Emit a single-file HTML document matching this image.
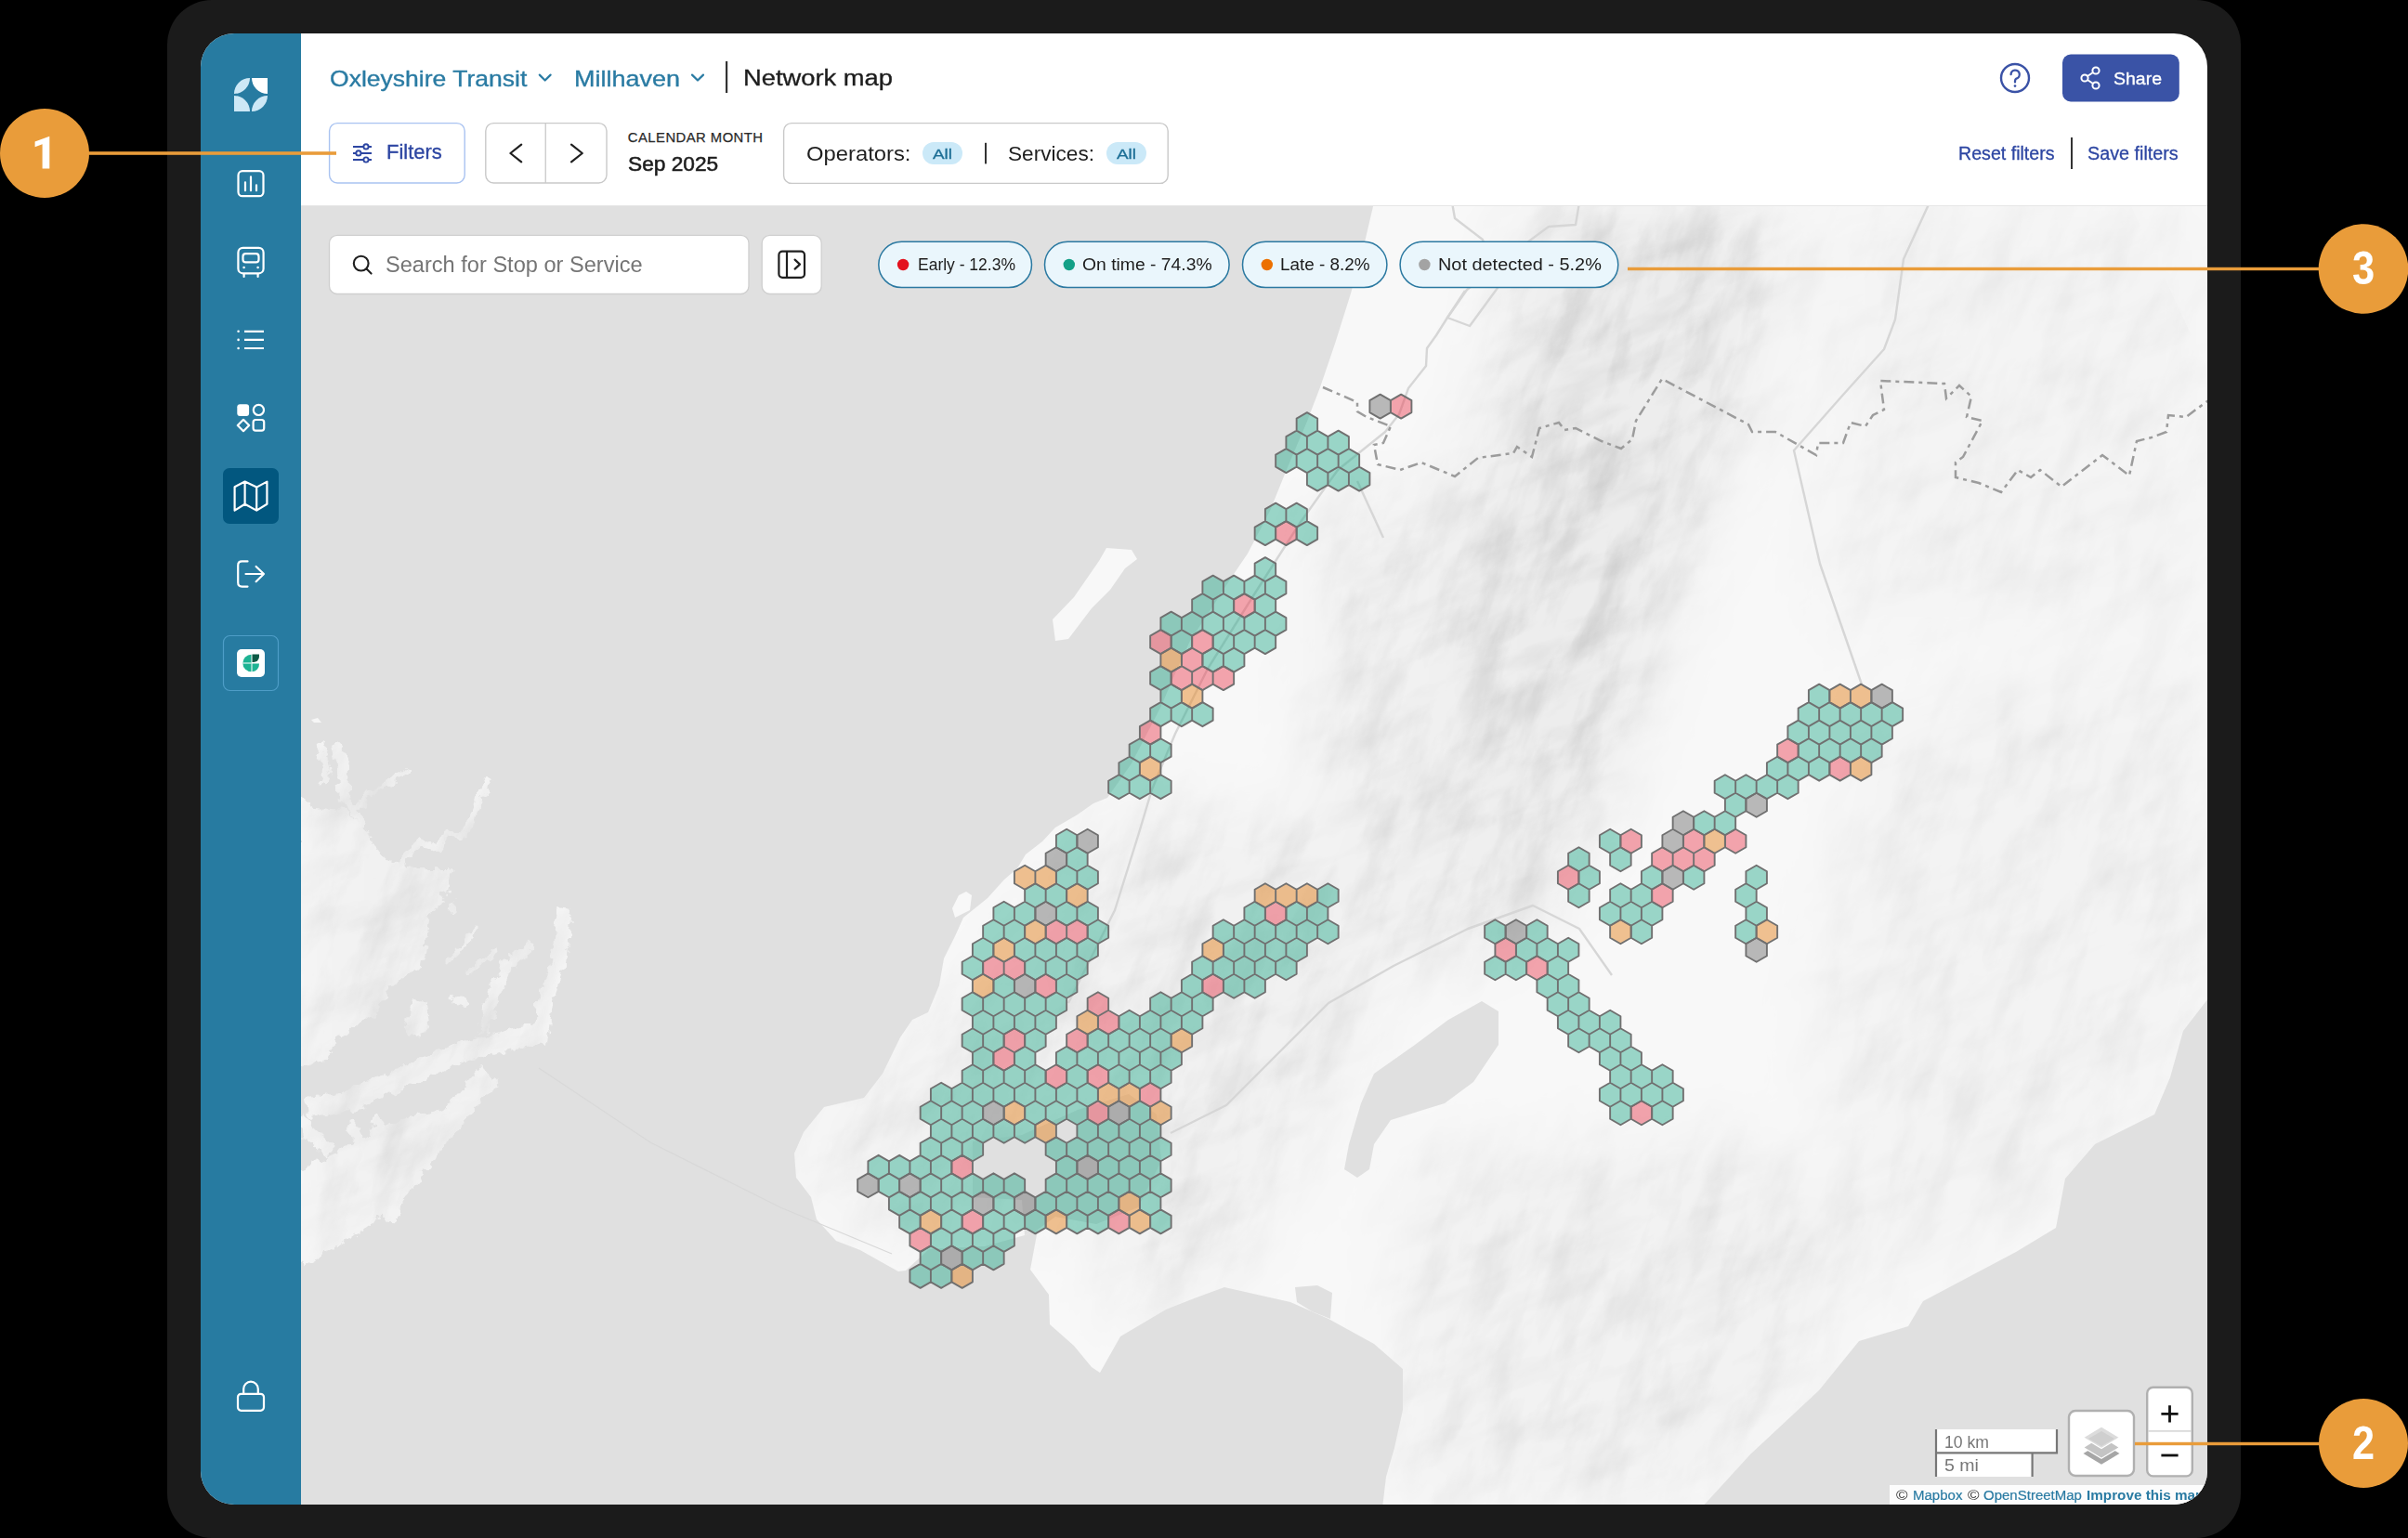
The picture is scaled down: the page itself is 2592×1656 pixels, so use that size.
<!DOCTYPE html>
<html><head><meta charset="utf-8"><style>
html,body{margin:0;padding:0;background:#000;width:2592px;height:1656px;overflow:hidden;position:relative}
.t{position:absolute;white-space:pre;font-family:"Liberation Sans",sans-serif;transform-origin:0 0}
</style></head><body>
<div style="position:absolute;left:180px;top:0;width:2232px;height:1656px;border-radius:48px;background:#1b1b1b"></div>
<div id="screen" style="position:absolute;left:216px;top:36px;width:2160px;height:1584px;border-radius:36px;overflow:hidden;background:#fff">
<div style="position:absolute;left:108px;top:186px;width:2052px;height:1398px;background:#e0e0e0;overflow:hidden">
<svg width="2052" height="1398" viewBox="324 222 2052 1398" style="position:absolute;left:0;top:0">
<defs><filter id="rough" x="-10%" y="-10%" width="120%" height="120%"><feTurbulence type="fractalNoise" baseFrequency="0.09" numOctaves="3" seed="5" result="t"/><feDisplacementMap in="SourceGraphic" in2="t" scale="14" xChannelSelector="R" yChannelSelector="G"/></filter><mask id="landmask" maskUnits="userSpaceOnUse" x="300" y="200" width="2100" height="1450"><rect x="300" y="200" width="2100" height="1450" fill="#000"/><path d="M1479,218L2380,218L2380,1071L2350,1110L2336,1160L2319,1200L2255,1232L2223,1269L2213,1322L2170,1348L2070,1401L2054,1428L2001,1444L1958,1497L1884,1566L1831,1624L1488,1624L1492,1590L1501,1559L1510,1518L1510,1474L1479,1447L1430,1420L1389,1402L1318,1386L1288,1397L1255,1410L1206,1439L1184,1478L1175,1472L1156,1449L1130,1426L1129,1394L1109,1367L1117,1324L1103,1330L1060,1342L1000,1345L975,1368L967,1369L949,1359L926,1346L900,1336L879,1313L873,1289L857,1268L855,1242L865,1219L887,1192L930,1182L950,1156L969,1117L982,1098L999,1090L1011,1061L1016,1032L1028,1008L1037,988L1063,967L1081,947L1095,935L1104,920L1122,906L1136,891L1160,877L1177,865L1192,859L1218,822L1234,791L1250,760L1265,725L1281,690L1304,655L1324,624L1343,596L1367,550L1386,503L1406,456L1421,417L1437,370L1454,316L1468,265ZM1191,590L1218,592L1224,602L1211,612L1195,635L1175,655L1150,688L1136,690L1133,667L1156,643L1183,604ZM1040,960L1046,964L1044,980L1028,988L1025,978L1032,964ZM335,775L342,773L346,778L338,778Z" fill="#fff"/><g filter="url(#rough)"><path d="M320,857L340,870L371,872L395,902L420,930L452,935L486,935L480,960L462,990L455,1040L420,1062L400,1095L370,1112L350,1140L320,1152ZM487,1072L502,1073L500,1084L489,1083ZM445,1074L458,1080L462,1110L440,1117L436,1100ZM320,1262L360,1242L400,1218L440,1203L478,1192L495,1202L468,1250L430,1288L380,1318L320,1340Z" fill="#fff"/><path d="M361,802L369,822L371,857L385,880L396,908" fill="none" stroke="#fff" stroke-width="11" stroke-linecap="butt" stroke-linejoin="round"/><path d="M439,827L423,843L400,853L382,873" fill="none" stroke="#fff" stroke-width="6" stroke-linecap="butt" stroke-linejoin="round"/><path d="M529,838L520,851L511,873L503,896L480,898L472,915L453,906L435,925L433,947" fill="none" stroke="#fff" stroke-width="8" stroke-linecap="butt" stroke-linejoin="round"/><path d="M607,978L605,1000L601,1037L586,1081L581,1123" fill="none" stroke="#fff" stroke-width="16" stroke-linecap="butt" stroke-linejoin="round"/><path d="M585,1112L540,1122L497,1132L435,1160L369,1188L330,1192" fill="none" stroke="#fff" stroke-width="22" stroke-linecap="butt" stroke-linejoin="round"/><path d="M537,1022L504,1047" fill="none" stroke="#fff" stroke-width="7" stroke-linecap="butt" stroke-linejoin="round"/><path d="M571,1018L546,1040L530,1075L520,1110" fill="none" stroke="#fff" stroke-width="13" stroke-linecap="butt" stroke-linejoin="round"/><path d="M514,1000L482,1035" fill="none" stroke="#fff" stroke-width="5" stroke-linecap="butt" stroke-linejoin="round"/><path d="M488,970L487,986" fill="none" stroke="#fff" stroke-width="5" stroke-linecap="butt" stroke-linejoin="round"/><path d="M320,1353L373,1321L423,1284L472,1222L527,1156" fill="none" stroke="#fff" stroke-width="26" stroke-linecap="butt" stroke-linejoin="round"/><path d="M383,1247L339,1296" fill="none" stroke="#fff" stroke-width="14" stroke-linecap="butt" stroke-linejoin="round"/><path d="M398,1247L376,1210" fill="none" stroke="#fff" stroke-width="12" stroke-linecap="butt" stroke-linejoin="round"/><path d="M423,1235L403,1203" fill="none" stroke="#fff" stroke-width="12" stroke-linecap="butt" stroke-linejoin="round"/><path d="M423,1259L420,1314" fill="none" stroke="#fff" stroke-width="14" stroke-linecap="butt" stroke-linejoin="round"/><path d="M320,1205L356,1240" fill="none" stroke="#fff" stroke-width="16" stroke-linecap="butt" stroke-linejoin="round"/><path d="M320,1290L345,1330" fill="none" stroke="#fff" stroke-width="20" stroke-linecap="butt" stroke-linejoin="round"/><path d="M345,800L352,830L345,845" fill="none" stroke="#fff" stroke-width="8" stroke-linecap="butt" stroke-linejoin="round"/></g></mask><filter id="mblur" x="-30%" y="-30%" width="160%" height="160%"><feGaussianBlur stdDeviation="35"/></filter><filter id="tex" x="0" y="0" width="1" height="1" color-interpolation-filters="sRGB"><feTurbulence type="fractalNoise" baseFrequency="0.011 0.032" numOctaves="5" seed="11" result="n"/><feColorMatrix in="n" type="matrix" values="0 0 0 0 0  0 0 0 0 0  0 0 0 0 0  2.4 0 0 0 -1.0"/></filter><mask id="mtn" maskUnits="userSpaceOnUse" x="300" y="200" width="2100" height="1450"><rect x="300" y="200" width="2100" height="1450" fill="#000"/><g filter="url(#mblur)"><path d="M1650,222 L1918,222 L1891,404 L1791,676 L1736,858 L1645,995 L1509,1040 L1480,858 L1560,585 Z" fill="#fff"/><path d="M1418,540 L1600,540 L1600,1040 L1418,1040 Z" fill="#aaa"/><path d="M1191,858 L1464,900 L1480,1100 L1400,1250 L1300,1404 L1191,1404 Z" fill="#999"/><path d="M1509,1250 L1850,1220 L2009,1300 L1950,1500 L1800,1620 L1509,1620 Z" fill="#8a8a8a"/><path d="M2009,767 L2376,700 L2376,1100 L2200,1300 L2009,1404 L1950,1100 Z" fill="#6a6a6a"/><path d="M1964,222 L2376,222 L2376,676 L1964,676 Z" fill="#5a5a5a"/><path d="M324,780 L540,840 L610,1000 L590,1150 L460,1330 L324,1360 Z" fill="#999"/><path d="M880,1180 L1000,1100 L1100,1000 L1190,900 L1200,1100 L1150,1300 L950,1350 L860,1260 Z" fill="#777"/></g></mask></defs>
<path d="M1479,218L2380,218L2380,1071L2350,1110L2336,1160L2319,1200L2255,1232L2223,1269L2213,1322L2170,1348L2070,1401L2054,1428L2001,1444L1958,1497L1884,1566L1831,1624L1488,1624L1492,1590L1501,1559L1510,1518L1510,1474L1479,1447L1430,1420L1389,1402L1318,1386L1288,1397L1255,1410L1206,1439L1184,1478L1175,1472L1156,1449L1130,1426L1129,1394L1109,1367L1117,1324L1103,1330L1060,1342L1000,1345L975,1368L967,1369L949,1359L926,1346L900,1336L879,1313L873,1289L857,1268L855,1242L865,1219L887,1192L930,1182L950,1156L969,1117L982,1098L999,1090L1011,1061L1016,1032L1028,1008L1037,988L1063,967L1081,947L1095,935L1104,920L1122,906L1136,891L1160,877L1177,865L1192,859L1218,822L1234,791L1250,760L1265,725L1281,690L1304,655L1324,624L1343,596L1367,550L1386,503L1406,456L1421,417L1437,370L1454,316L1468,265ZM1191,590L1218,592L1224,602L1211,612L1195,635L1175,655L1150,688L1136,690L1133,667L1156,643L1183,604ZM1040,960L1046,964L1044,980L1028,988L1025,978L1032,964ZM335,775L342,773L346,778L338,778Z" fill="#f8f8f8"/><g filter="url(#rough)"><path d="M320,857L340,870L371,872L395,902L420,930L452,935L486,935L480,960L462,990L455,1040L420,1062L400,1095L370,1112L350,1140L320,1152ZM487,1072L502,1073L500,1084L489,1083ZM445,1074L458,1080L462,1110L440,1117L436,1100ZM320,1262L360,1242L400,1218L440,1203L478,1192L495,1202L468,1250L430,1288L380,1318L320,1340Z" fill="#f8f8f8"/><path d="M361,802L369,822L371,857L385,880L396,908" fill="none" stroke="#f8f8f8" stroke-width="11" stroke-linecap="butt" stroke-linejoin="round"/><path d="M439,827L423,843L400,853L382,873" fill="none" stroke="#f8f8f8" stroke-width="6" stroke-linecap="butt" stroke-linejoin="round"/><path d="M529,838L520,851L511,873L503,896L480,898L472,915L453,906L435,925L433,947" fill="none" stroke="#f8f8f8" stroke-width="8" stroke-linecap="butt" stroke-linejoin="round"/><path d="M607,978L605,1000L601,1037L586,1081L581,1123" fill="none" stroke="#f8f8f8" stroke-width="16" stroke-linecap="butt" stroke-linejoin="round"/><path d="M585,1112L540,1122L497,1132L435,1160L369,1188L330,1192" fill="none" stroke="#f8f8f8" stroke-width="22" stroke-linecap="butt" stroke-linejoin="round"/><path d="M537,1022L504,1047" fill="none" stroke="#f8f8f8" stroke-width="7" stroke-linecap="butt" stroke-linejoin="round"/><path d="M571,1018L546,1040L530,1075L520,1110" fill="none" stroke="#f8f8f8" stroke-width="13" stroke-linecap="butt" stroke-linejoin="round"/><path d="M514,1000L482,1035" fill="none" stroke="#f8f8f8" stroke-width="5" stroke-linecap="butt" stroke-linejoin="round"/><path d="M488,970L487,986" fill="none" stroke="#f8f8f8" stroke-width="5" stroke-linecap="butt" stroke-linejoin="round"/><path d="M320,1353L373,1321L423,1284L472,1222L527,1156" fill="none" stroke="#f8f8f8" stroke-width="26" stroke-linecap="butt" stroke-linejoin="round"/><path d="M383,1247L339,1296" fill="none" stroke="#f8f8f8" stroke-width="14" stroke-linecap="butt" stroke-linejoin="round"/><path d="M398,1247L376,1210" fill="none" stroke="#f8f8f8" stroke-width="12" stroke-linecap="butt" stroke-linejoin="round"/><path d="M423,1235L403,1203" fill="none" stroke="#f8f8f8" stroke-width="12" stroke-linecap="butt" stroke-linejoin="round"/><path d="M423,1259L420,1314" fill="none" stroke="#f8f8f8" stroke-width="14" stroke-linecap="butt" stroke-linejoin="round"/><path d="M320,1205L356,1240" fill="none" stroke="#f8f8f8" stroke-width="16" stroke-linecap="butt" stroke-linejoin="round"/><path d="M320,1290L345,1330" fill="none" stroke="#f8f8f8" stroke-width="20" stroke-linecap="butt" stroke-linejoin="round"/><path d="M345,800L352,830L345,845" fill="none" stroke="#f8f8f8" stroke-width="8" stroke-linecap="butt" stroke-linejoin="round"/></g>
<g mask="url(#landmask)"><g mask="url(#mtn)"><rect x="300" y="200" width="2100" height="1450" fill="#000" opacity="0.045"/><g transform="rotate(-68 1350 920)"><rect x="200" y="-300" width="2300" height="2450" fill="#000" filter="url(#tex)" opacity="0.085"/></g><g transform="rotate(-25 1350 920)"><rect x="200" y="-300" width="2300" height="2450" fill="#000" filter="url(#tex)" opacity="0.05"/></g></g></g>
<path d="M1047,1229L1100,1222L1160,1195L1215,1178L1245,1200L1250,1250L1225,1300L1180,1318L1136,1310L1117,1324L1103,1330L1100,1292L1047,1289ZM1595,1078L1613,1089L1613,1125L1586,1165L1555,1188L1497,1206L1479,1232L1474,1259L1461,1268L1447,1259L1452,1232L1465,1188L1479,1156L1523,1125L1559,1098ZM1394,1386L1418,1384L1434,1392L1432,1420L1412,1412L1396,1402Z" fill="#e0e0e0"/>
<path d="M2077,218L2049,279L2040,344L2028,376L1984,425L1931,485L1959,607L2004,737" fill="none" stroke="#d6d6d6" stroke-width="2.4" stroke-linejoin="round"/>
<path d="M1700,218L1696,242L1667,244L1648,258L1579,312L1558,342L1546,361L1536,375L1535,394L1516,418L1506,446L1491,465L1440,506L1400,562L1350,640L1300,720L1265,790L1240,850L1225,900L1200,980L1175,1030L1150,1080" fill="none" stroke="#d6d6d6" stroke-width="2.4" stroke-linejoin="round"/>
<path d="M1563,218L1566,235L1596,258L1612,310L1582,351L1558,342L1577,313" fill="none" stroke="#d6d6d6" stroke-width="2.4" stroke-linejoin="round"/>
<path d="M1461,518L1489,579" fill="none" stroke="#d6d6d6" stroke-width="2.4" stroke-linejoin="round"/>
<path d="M1735,1050L1700,1000L1650,975L1580,1000L1500,1040L1430,1080L1380,1130L1320,1190L1260,1220" fill="none" stroke="#d6d6d6" stroke-width="2.4" stroke-linejoin="round"/>
<path d="M1424,417L1461,433L1461,443L1471,449L1497,459L1489,477L1479,479L1483,500L1507,506L1530,498L1566,513L1591,493L1629,488L1633,481L1649,492L1657,461L1678,455L1684,463L1696,461L1724,475L1745,483L1757,473L1761,453L1789,408L1882,457L1886,465L1911,465L1955,490L1957,477L1984,477L1992,455L2008,459L2016,447L2028,441L2024,410L2093,413L2095,429L2109,415L2122,427L2117,449L2134,453L2113,492L2105,498L2105,514L2130,520L2154,530L2172,506L2186,514L2196,506L2219,524L2263,490L2292,512L2300,475L2316,471L2332,465L2334,447L2353,449L2380,429" fill="none" stroke="#9c9c9c" stroke-width="2.5" stroke-dasharray="11 5 4 5"/>
<path d="M580,1150 L700,1230 L840,1300 L960,1350" fill="none" stroke="#d8d8d8" stroke-width="1.2"/>
<path d="M1406.90,470.09L1395.65,463.60L1395.65,450.60L1406.90,444.11L1418.15,450.60L1418.15,463.60ZM1395.65,489.60L1384.40,483.10L1384.40,470.11L1395.65,463.61L1406.90,470.11L1406.90,483.10ZM1418.15,489.60L1406.90,483.10L1406.90,470.11L1418.15,463.61L1429.40,470.11L1429.40,483.10ZM1440.65,489.60L1429.40,483.10L1429.40,470.11L1440.65,463.61L1451.90,470.11L1451.90,483.10ZM1384.40,509.10L1373.15,502.61L1373.15,489.61L1384.40,483.12L1395.65,489.61L1395.65,502.61ZM1406.90,509.10L1395.65,502.61L1395.65,489.61L1406.90,483.12L1418.15,489.61L1418.15,502.61ZM1429.40,509.10L1418.15,502.61L1418.15,489.61L1429.40,483.12L1440.65,489.61L1440.65,502.61ZM1451.90,509.10L1440.65,502.61L1440.65,489.61L1451.90,483.12L1463.15,489.61L1463.15,502.61ZM1418.15,528.61L1406.90,522.11L1406.90,509.12L1418.15,502.62L1429.40,509.12L1429.40,522.11ZM1440.65,528.61L1429.40,522.11L1429.40,509.12L1440.65,502.62L1451.90,509.12L1451.90,522.11ZM1463.15,528.61L1451.90,522.11L1451.90,509.12L1463.15,502.62L1474.40,509.12L1474.40,522.11ZM1373.15,567.62L1361.90,561.12L1361.90,548.13L1373.15,541.63L1384.40,548.13L1384.40,561.12ZM1395.65,567.62L1384.40,561.12L1384.40,548.13L1395.65,541.63L1406.90,548.13L1406.90,561.12ZM1361.90,587.12L1350.65,580.63L1350.65,567.63L1361.90,561.14L1373.15,567.63L1373.15,580.63ZM1406.90,587.12L1395.65,580.63L1395.65,567.63L1406.90,561.14L1418.15,567.63L1418.15,580.63ZM1361.90,626.13L1350.65,619.64L1350.65,606.64L1361.90,600.15L1373.15,606.64L1373.15,619.64ZM1305.65,645.64L1294.40,639.14L1294.40,626.15L1305.65,619.65L1316.90,626.15L1316.90,639.14ZM1328.15,645.64L1316.90,639.14L1316.90,626.15L1328.15,619.65L1339.40,626.15L1339.40,639.14ZM1350.65,645.64L1339.40,639.14L1339.40,626.15L1350.65,619.65L1361.90,626.15L1361.90,639.14ZM1373.15,645.64L1361.90,639.14L1361.90,626.15L1373.15,619.65L1384.40,626.15L1384.40,639.14ZM1294.40,665.14L1283.15,658.65L1283.15,645.65L1294.40,639.16L1305.65,645.65L1305.65,658.65ZM1316.90,665.14L1305.65,658.65L1305.65,645.65L1316.90,639.16L1328.15,645.65L1328.15,658.65ZM1361.90,665.14L1350.65,658.65L1350.65,645.65L1361.90,639.16L1373.15,645.65L1373.15,658.65ZM1260.65,684.65L1249.40,678.15L1249.40,665.16L1260.65,658.66L1271.90,665.16L1271.90,678.15ZM1283.15,684.65L1271.90,678.15L1271.90,665.16L1283.15,658.66L1294.40,665.16L1294.40,678.15ZM1305.65,684.65L1294.40,678.15L1294.40,665.16L1305.65,658.66L1316.90,665.16L1316.90,678.15ZM1328.15,684.65L1316.90,678.15L1316.90,665.16L1328.15,658.66L1339.40,665.16L1339.40,678.15ZM1350.65,684.65L1339.40,678.15L1339.40,665.16L1350.65,658.66L1361.90,665.16L1361.90,678.15ZM1373.15,684.65L1361.90,678.15L1361.90,665.16L1373.15,658.66L1384.40,665.16L1384.40,678.15ZM1271.90,704.15L1260.65,697.66L1260.65,684.66L1271.90,678.17L1283.15,684.66L1283.15,697.66ZM1316.90,704.15L1305.65,697.66L1305.65,684.66L1316.90,678.17L1328.15,684.66L1328.15,697.66ZM1339.40,704.15L1328.15,697.66L1328.15,684.66L1339.40,678.17L1350.65,684.66L1350.65,697.66ZM1361.90,704.15L1350.65,697.66L1350.65,684.66L1361.90,678.17L1373.15,684.66L1373.15,697.66ZM1305.65,723.66L1294.40,717.16L1294.40,704.17L1305.65,697.67L1316.90,704.17L1316.90,717.16ZM1328.15,723.66L1316.90,717.16L1316.90,704.17L1328.15,697.67L1339.40,704.17L1339.40,717.16ZM1249.40,743.16L1238.15,736.67L1238.15,723.67L1249.40,717.18L1260.65,723.67L1260.65,736.67ZM1260.65,762.67L1249.40,756.17L1249.40,743.18L1260.65,736.68L1271.90,743.18L1271.90,756.17ZM1958.15,762.67L1946.90,756.17L1946.90,743.18L1958.15,736.68L1969.40,743.18L1969.40,756.17ZM1249.40,782.17L1238.15,775.68L1238.15,762.68L1249.40,756.19L1260.65,762.68L1260.65,775.68ZM1271.90,782.17L1260.65,775.68L1260.65,762.68L1271.90,756.19L1283.15,762.68L1283.15,775.68ZM1294.40,782.17L1283.15,775.68L1283.15,762.68L1294.40,756.19L1305.65,762.68L1305.65,775.68ZM1946.90,782.17L1935.65,775.68L1935.65,762.68L1946.90,756.19L1958.15,762.68L1958.15,775.68ZM1969.40,782.17L1958.15,775.68L1958.15,762.68L1969.40,756.19L1980.65,762.68L1980.65,775.68ZM1991.90,782.17L1980.65,775.68L1980.65,762.68L1991.90,756.19L2003.15,762.68L2003.15,775.68ZM2014.40,782.17L2003.15,775.68L2003.15,762.68L2014.40,756.19L2025.65,762.68L2025.65,775.68ZM2036.90,782.17L2025.65,775.68L2025.65,762.68L2036.90,756.19L2048.15,762.68L2048.15,775.68ZM1935.65,801.68L1924.40,795.18L1924.40,782.19L1935.65,775.69L1946.90,782.19L1946.90,795.18ZM1958.15,801.68L1946.90,795.18L1946.90,782.19L1958.15,775.69L1969.40,782.19L1969.40,795.18ZM1980.65,801.68L1969.40,795.18L1969.40,782.19L1980.65,775.69L1991.90,782.19L1991.90,795.18ZM2003.15,801.68L1991.90,795.18L1991.90,782.19L2003.15,775.69L2014.40,782.19L2014.40,795.18ZM2025.65,801.68L2014.40,795.18L2014.40,782.19L2025.65,775.69L2036.90,782.19L2036.90,795.18ZM1226.90,821.18L1215.65,814.69L1215.65,801.69L1226.90,795.20L1238.15,801.69L1238.15,814.69ZM1249.40,821.18L1238.15,814.69L1238.15,801.69L1249.40,795.20L1260.65,801.69L1260.65,814.69ZM1946.90,821.18L1935.65,814.69L1935.65,801.69L1946.90,795.20L1958.15,801.69L1958.15,814.69ZM1969.40,821.18L1958.15,814.69L1958.15,801.69L1969.40,795.20L1980.65,801.69L1980.65,814.69ZM1991.90,821.18L1980.65,814.69L1980.65,801.69L1991.90,795.20L2003.15,801.69L2003.15,814.69ZM2014.40,821.18L2003.15,814.69L2003.15,801.69L2014.40,795.20L2025.65,801.69L2025.65,814.69ZM1215.65,840.69L1204.40,834.19L1204.40,821.20L1215.65,814.70L1226.90,821.20L1226.90,834.19ZM1913.15,840.69L1901.90,834.19L1901.90,821.20L1913.15,814.70L1924.40,821.20L1924.40,834.19ZM1935.65,840.69L1924.40,834.19L1924.40,821.20L1935.65,814.70L1946.90,821.20L1946.90,834.19ZM1958.15,840.69L1946.90,834.19L1946.90,821.20L1958.15,814.70L1969.40,821.20L1969.40,834.19ZM1204.40,860.19L1193.15,853.70L1193.15,840.70L1204.40,834.21L1215.65,840.70L1215.65,853.70ZM1226.90,860.19L1215.65,853.70L1215.65,840.70L1226.90,834.21L1238.15,840.70L1238.15,853.70ZM1249.40,860.19L1238.15,853.70L1238.15,840.70L1249.40,834.21L1260.65,840.70L1260.65,853.70ZM1856.90,860.19L1845.65,853.70L1845.65,840.70L1856.90,834.21L1868.15,840.70L1868.15,853.70ZM1879.40,860.19L1868.15,853.70L1868.15,840.70L1879.40,834.21L1890.65,840.70L1890.65,853.70ZM1901.90,860.19L1890.65,853.70L1890.65,840.70L1901.90,834.21L1913.15,840.70L1913.15,853.70ZM1924.40,860.19L1913.15,853.70L1913.15,840.70L1924.40,834.21L1935.65,840.70L1935.65,853.70ZM1868.15,879.70L1856.90,873.20L1856.90,860.21L1868.15,853.71L1879.40,860.21L1879.40,873.20ZM1834.40,899.20L1823.15,892.71L1823.15,879.71L1834.40,873.22L1845.65,879.71L1845.65,892.71ZM1856.90,899.20L1845.65,892.71L1845.65,879.71L1856.90,873.22L1868.15,879.71L1868.15,892.71ZM1148.15,918.71L1136.90,912.21L1136.90,899.22L1148.15,892.72L1159.40,899.22L1159.40,912.21ZM1733.15,918.71L1721.90,912.21L1721.90,899.22L1733.15,892.72L1744.40,899.22L1744.40,912.21ZM1159.40,938.21L1148.15,931.72L1148.15,918.72L1159.40,912.23L1170.65,918.72L1170.65,931.72ZM1699.40,938.21L1688.15,931.72L1688.15,918.72L1699.40,912.23L1710.65,918.72L1710.65,931.72ZM1744.40,938.21L1733.15,931.72L1733.15,918.72L1744.40,912.23L1755.65,918.72L1755.65,931.72ZM1148.15,957.72L1136.90,951.22L1136.90,938.23L1148.15,931.73L1159.40,938.23L1159.40,951.22ZM1170.65,957.72L1159.40,951.22L1159.40,938.23L1170.65,931.73L1181.90,938.23L1181.90,951.22ZM1710.65,957.72L1699.40,951.22L1699.40,938.23L1710.65,931.73L1721.90,938.23L1721.90,951.22ZM1778.15,957.72L1766.90,951.22L1766.90,938.23L1778.15,931.73L1789.40,938.23L1789.40,951.22ZM1823.15,957.72L1811.90,951.22L1811.90,938.23L1823.15,931.73L1834.40,938.23L1834.40,951.22ZM1890.65,957.72L1879.40,951.22L1879.40,938.23L1890.65,931.73L1901.90,938.23L1901.90,951.22ZM1114.40,977.22L1103.15,970.73L1103.15,957.73L1114.40,951.24L1125.65,957.73L1125.65,970.73ZM1136.90,977.22L1125.65,970.73L1125.65,957.73L1136.90,951.24L1148.15,957.73L1148.15,970.73ZM1429.40,977.22L1418.15,970.73L1418.15,957.73L1429.40,951.24L1440.65,957.73L1440.65,970.73ZM1699.40,977.22L1688.15,970.73L1688.15,957.73L1699.40,951.24L1710.65,957.73L1710.65,970.73ZM1744.40,977.22L1733.15,970.73L1733.15,957.73L1744.40,951.24L1755.65,957.73L1755.65,970.73ZM1766.90,977.22L1755.65,970.73L1755.65,957.73L1766.90,951.24L1778.15,957.73L1778.15,970.73ZM1879.40,977.22L1868.15,970.73L1868.15,957.73L1879.40,951.24L1890.65,957.73L1890.65,970.73ZM1080.65,996.73L1069.40,990.23L1069.40,977.24L1080.65,970.74L1091.90,977.24L1091.90,990.23ZM1103.15,996.73L1091.90,990.23L1091.90,977.24L1103.15,970.74L1114.40,977.24L1114.40,990.23ZM1148.15,996.73L1136.90,990.23L1136.90,977.24L1148.15,970.74L1159.40,977.24L1159.40,990.23ZM1170.65,996.73L1159.40,990.23L1159.40,977.24L1170.65,970.74L1181.90,977.24L1181.90,990.23ZM1350.65,996.73L1339.40,990.23L1339.40,977.24L1350.65,970.74L1361.90,977.24L1361.90,990.23ZM1395.65,996.73L1384.40,990.23L1384.40,977.24L1395.65,970.74L1406.90,977.24L1406.90,990.23ZM1418.15,996.73L1406.90,990.23L1406.90,977.24L1418.15,970.74L1429.40,977.24L1429.40,990.23ZM1733.15,996.73L1721.90,990.23L1721.90,977.24L1733.15,970.74L1744.40,977.24L1744.40,990.23ZM1755.65,996.73L1744.40,990.23L1744.40,977.24L1755.65,970.74L1766.90,977.24L1766.90,990.23ZM1778.15,996.73L1766.90,990.23L1766.90,977.24L1778.15,970.74L1789.40,977.24L1789.40,990.23ZM1890.65,996.73L1879.40,990.23L1879.40,977.24L1890.65,970.74L1901.90,977.24L1901.90,990.23ZM1069.40,1016.23L1058.15,1009.74L1058.15,996.74L1069.40,990.25L1080.65,996.74L1080.65,1009.74ZM1091.90,1016.23L1080.65,1009.74L1080.65,996.74L1091.90,990.25L1103.15,996.74L1103.15,1009.74ZM1181.90,1016.23L1170.65,1009.74L1170.65,996.74L1181.90,990.25L1193.15,996.74L1193.15,1009.74ZM1316.90,1016.23L1305.65,1009.74L1305.65,996.74L1316.90,990.25L1328.15,996.74L1328.15,1009.74ZM1339.40,1016.23L1328.15,1009.74L1328.15,996.74L1339.40,990.25L1350.65,996.74L1350.65,1009.74ZM1361.90,1016.23L1350.65,1009.74L1350.65,996.74L1361.90,990.25L1373.15,996.74L1373.15,1009.74ZM1384.40,1016.23L1373.15,1009.74L1373.15,996.74L1384.40,990.25L1395.65,996.74L1395.65,1009.74ZM1406.90,1016.23L1395.65,1009.74L1395.65,996.74L1406.90,990.25L1418.15,996.74L1418.15,1009.74ZM1429.40,1016.23L1418.15,1009.74L1418.15,996.74L1429.40,990.25L1440.65,996.74L1440.65,1009.74ZM1609.40,1016.23L1598.15,1009.74L1598.15,996.74L1609.40,990.25L1620.65,996.74L1620.65,1009.74ZM1654.40,1016.23L1643.15,1009.74L1643.15,996.74L1654.40,990.25L1665.65,996.74L1665.65,1009.74ZM1766.90,1016.23L1755.65,1009.74L1755.65,996.74L1766.90,990.25L1778.15,996.74L1778.15,1009.74ZM1879.40,1016.23L1868.15,1009.74L1868.15,996.74L1879.40,990.25L1890.65,996.74L1890.65,1009.74ZM1058.15,1035.74L1046.90,1029.24L1046.90,1016.25L1058.15,1009.75L1069.40,1016.25L1069.40,1029.24ZM1103.15,1035.74L1091.90,1029.24L1091.90,1016.25L1103.15,1009.75L1114.40,1016.25L1114.40,1029.24ZM1125.65,1035.74L1114.40,1029.24L1114.40,1016.25L1125.65,1009.75L1136.90,1016.25L1136.90,1029.24ZM1148.15,1035.74L1136.90,1029.24L1136.90,1016.25L1148.15,1009.75L1159.40,1016.25L1159.40,1029.24ZM1170.65,1035.74L1159.40,1029.24L1159.40,1016.25L1170.65,1009.75L1181.90,1016.25L1181.90,1029.24ZM1328.15,1035.74L1316.90,1029.24L1316.90,1016.25L1328.15,1009.75L1339.40,1016.25L1339.40,1029.24ZM1350.65,1035.74L1339.40,1029.24L1339.40,1016.25L1350.65,1009.75L1361.90,1016.25L1361.90,1029.24ZM1373.15,1035.74L1361.90,1029.24L1361.90,1016.25L1373.15,1009.75L1384.40,1016.25L1384.40,1029.24ZM1395.65,1035.74L1384.40,1029.24L1384.40,1016.25L1395.65,1009.75L1406.90,1016.25L1406.90,1029.24ZM1643.15,1035.74L1631.90,1029.24L1631.90,1016.25L1643.15,1009.75L1654.40,1016.25L1654.40,1029.24ZM1665.65,1035.74L1654.40,1029.24L1654.40,1016.25L1665.65,1009.75L1676.90,1016.25L1676.90,1029.24ZM1688.15,1035.74L1676.90,1029.24L1676.90,1016.25L1688.15,1009.75L1699.40,1016.25L1699.40,1029.24ZM1046.90,1055.24L1035.65,1048.75L1035.65,1035.75L1046.90,1029.26L1058.15,1035.75L1058.15,1048.75ZM1114.40,1055.24L1103.15,1048.75L1103.15,1035.75L1114.40,1029.26L1125.65,1035.75L1125.65,1048.75ZM1136.90,1055.24L1125.65,1048.75L1125.65,1035.75L1136.90,1029.26L1148.15,1035.75L1148.15,1048.75ZM1159.40,1055.24L1148.15,1048.75L1148.15,1035.75L1159.40,1029.26L1170.65,1035.75L1170.65,1048.75ZM1294.40,1055.24L1283.15,1048.75L1283.15,1035.75L1294.40,1029.26L1305.65,1035.75L1305.65,1048.75ZM1316.90,1055.24L1305.65,1048.75L1305.65,1035.75L1316.90,1029.26L1328.15,1035.75L1328.15,1048.75ZM1339.40,1055.24L1328.15,1048.75L1328.15,1035.75L1339.40,1029.26L1350.65,1035.75L1350.65,1048.75ZM1361.90,1055.24L1350.65,1048.75L1350.65,1035.75L1361.90,1029.26L1373.15,1035.75L1373.15,1048.75ZM1384.40,1055.24L1373.15,1048.75L1373.15,1035.75L1384.40,1029.26L1395.65,1035.75L1395.65,1048.75ZM1609.40,1055.24L1598.15,1048.75L1598.15,1035.75L1609.40,1029.26L1620.65,1035.75L1620.65,1048.75ZM1631.90,1055.24L1620.65,1048.75L1620.65,1035.75L1631.90,1029.26L1643.15,1035.75L1643.15,1048.75ZM1676.90,1055.24L1665.65,1048.75L1665.65,1035.75L1676.90,1029.26L1688.15,1035.75L1688.15,1048.75ZM1080.65,1074.75L1069.40,1068.25L1069.40,1055.26L1080.65,1048.76L1091.90,1055.26L1091.90,1068.25ZM1148.15,1074.75L1136.90,1068.25L1136.90,1055.26L1148.15,1048.76L1159.40,1055.26L1159.40,1068.25ZM1283.15,1074.75L1271.90,1068.25L1271.90,1055.26L1283.15,1048.76L1294.40,1055.26L1294.40,1068.25ZM1328.15,1074.75L1316.90,1068.25L1316.90,1055.26L1328.15,1048.76L1339.40,1055.26L1339.40,1068.25ZM1350.65,1074.75L1339.40,1068.25L1339.40,1055.26L1350.65,1048.76L1361.90,1055.26L1361.90,1068.25ZM1665.65,1074.75L1654.40,1068.25L1654.40,1055.26L1665.65,1048.76L1676.90,1055.26L1676.90,1068.25ZM1688.15,1074.75L1676.90,1068.25L1676.90,1055.26L1688.15,1048.76L1699.40,1055.26L1699.40,1068.25ZM1046.90,1094.25L1035.65,1087.76L1035.65,1074.76L1046.90,1068.27L1058.15,1074.76L1058.15,1087.76ZM1069.40,1094.25L1058.15,1087.76L1058.15,1074.76L1069.40,1068.27L1080.65,1074.76L1080.65,1087.76ZM1091.90,1094.25L1080.65,1087.76L1080.65,1074.76L1091.90,1068.27L1103.15,1074.76L1103.15,1087.76ZM1114.40,1094.25L1103.15,1087.76L1103.15,1074.76L1114.40,1068.27L1125.65,1074.76L1125.65,1087.76ZM1136.90,1094.25L1125.65,1087.76L1125.65,1074.76L1136.90,1068.27L1148.15,1074.76L1148.15,1087.76ZM1249.40,1094.25L1238.15,1087.76L1238.15,1074.76L1249.40,1068.27L1260.65,1074.76L1260.65,1087.76ZM1271.90,1094.25L1260.65,1087.76L1260.65,1074.76L1271.90,1068.27L1283.15,1074.76L1283.15,1087.76ZM1294.40,1094.25L1283.15,1087.76L1283.15,1074.76L1294.40,1068.27L1305.65,1074.76L1305.65,1087.76ZM1676.90,1094.25L1665.65,1087.76L1665.65,1074.76L1676.90,1068.27L1688.15,1074.76L1688.15,1087.76ZM1699.40,1094.25L1688.15,1087.76L1688.15,1074.76L1699.40,1068.27L1710.65,1074.76L1710.65,1087.76ZM1058.15,1113.76L1046.90,1107.26L1046.90,1094.27L1058.15,1087.77L1069.40,1094.27L1069.40,1107.26ZM1080.65,1113.76L1069.40,1107.26L1069.40,1094.27L1080.65,1087.77L1091.90,1094.27L1091.90,1107.26ZM1103.15,1113.76L1091.90,1107.26L1091.90,1094.27L1103.15,1087.77L1114.40,1094.27L1114.40,1107.26ZM1125.65,1113.76L1114.40,1107.26L1114.40,1094.27L1125.65,1087.77L1136.90,1094.27L1136.90,1107.26ZM1215.65,1113.76L1204.40,1107.26L1204.40,1094.27L1215.65,1087.77L1226.90,1094.27L1226.90,1107.26ZM1238.15,1113.76L1226.90,1107.26L1226.90,1094.27L1238.15,1087.77L1249.40,1094.27L1249.40,1107.26ZM1260.65,1113.76L1249.40,1107.26L1249.40,1094.27L1260.65,1087.77L1271.90,1094.27L1271.90,1107.26ZM1283.15,1113.76L1271.90,1107.26L1271.90,1094.27L1283.15,1087.77L1294.40,1094.27L1294.40,1107.26ZM1688.15,1113.76L1676.90,1107.26L1676.90,1094.27L1688.15,1087.77L1699.40,1094.27L1699.40,1107.26ZM1710.65,1113.76L1699.40,1107.26L1699.40,1094.27L1710.65,1087.77L1721.90,1094.27L1721.90,1107.26ZM1733.15,1113.76L1721.90,1107.26L1721.90,1094.27L1733.15,1087.77L1744.40,1094.27L1744.40,1107.26ZM1046.90,1133.26L1035.65,1126.77L1035.65,1113.77L1046.90,1107.28L1058.15,1113.77L1058.15,1126.77ZM1069.40,1133.26L1058.15,1126.77L1058.15,1113.77L1069.40,1107.28L1080.65,1113.77L1080.65,1126.77ZM1114.40,1133.26L1103.15,1126.77L1103.15,1113.77L1114.40,1107.28L1125.65,1113.77L1125.65,1126.77ZM1181.90,1133.26L1170.65,1126.77L1170.65,1113.77L1181.90,1107.28L1193.15,1113.77L1193.15,1126.77ZM1204.40,1133.26L1193.15,1126.77L1193.15,1113.77L1204.40,1107.28L1215.65,1113.77L1215.65,1126.77ZM1226.90,1133.26L1215.65,1126.77L1215.65,1113.77L1226.90,1107.28L1238.15,1113.77L1238.15,1126.77ZM1249.40,1133.26L1238.15,1126.77L1238.15,1113.77L1249.40,1107.28L1260.65,1113.77L1260.65,1126.77ZM1699.40,1133.26L1688.15,1126.77L1688.15,1113.77L1699.40,1107.28L1710.65,1113.77L1710.65,1126.77ZM1721.90,1133.26L1710.65,1126.77L1710.65,1113.77L1721.90,1107.28L1733.15,1113.77L1733.15,1126.77ZM1744.40,1133.26L1733.15,1126.77L1733.15,1113.77L1744.40,1107.28L1755.65,1113.77L1755.65,1126.77ZM1058.15,1152.77L1046.90,1146.27L1046.90,1133.28L1058.15,1126.78L1069.40,1133.28L1069.40,1146.27ZM1103.15,1152.77L1091.90,1146.27L1091.90,1133.28L1103.15,1126.78L1114.40,1133.28L1114.40,1146.27ZM1148.15,1152.77L1136.90,1146.27L1136.90,1133.28L1148.15,1126.78L1159.40,1133.28L1159.40,1146.27ZM1170.65,1152.77L1159.40,1146.27L1159.40,1133.28L1170.65,1126.78L1181.90,1133.28L1181.90,1146.27ZM1193.15,1152.77L1181.90,1146.27L1181.90,1133.28L1193.15,1126.78L1204.40,1133.28L1204.40,1146.27ZM1215.65,1152.77L1204.40,1146.27L1204.40,1133.28L1215.65,1126.78L1226.90,1133.28L1226.90,1146.27ZM1238.15,1152.77L1226.90,1146.27L1226.90,1133.28L1238.15,1126.78L1249.40,1133.28L1249.40,1146.27ZM1260.65,1152.77L1249.40,1146.27L1249.40,1133.28L1260.65,1126.78L1271.90,1133.28L1271.90,1146.27ZM1733.15,1152.77L1721.90,1146.27L1721.90,1133.28L1733.15,1126.78L1744.40,1133.28L1744.40,1146.27ZM1755.65,1152.77L1744.40,1146.27L1744.40,1133.28L1755.65,1126.78L1766.90,1133.28L1766.90,1146.27ZM1046.90,1172.27L1035.65,1165.78L1035.65,1152.78L1046.90,1146.29L1058.15,1152.78L1058.15,1165.78ZM1069.40,1172.27L1058.15,1165.78L1058.15,1152.78L1069.40,1146.29L1080.65,1152.78L1080.65,1165.78ZM1091.90,1172.27L1080.65,1165.78L1080.65,1152.78L1091.90,1146.29L1103.15,1152.78L1103.15,1165.78ZM1114.40,1172.27L1103.15,1165.78L1103.15,1152.78L1114.40,1146.29L1125.65,1152.78L1125.65,1165.78ZM1159.40,1172.27L1148.15,1165.78L1148.15,1152.78L1159.40,1146.29L1170.65,1152.78L1170.65,1165.78ZM1204.40,1172.27L1193.15,1165.78L1193.15,1152.78L1204.40,1146.29L1215.65,1152.78L1215.65,1165.78ZM1226.90,1172.27L1215.65,1165.78L1215.65,1152.78L1226.90,1146.29L1238.15,1152.78L1238.15,1165.78ZM1249.40,1172.27L1238.15,1165.78L1238.15,1152.78L1249.40,1146.29L1260.65,1152.78L1260.65,1165.78ZM1744.40,1172.27L1733.15,1165.78L1733.15,1152.78L1744.40,1146.29L1755.65,1152.78L1755.65,1165.78ZM1766.90,1172.27L1755.65,1165.78L1755.65,1152.78L1766.90,1146.29L1778.15,1152.78L1778.15,1165.78ZM1789.40,1172.27L1778.15,1165.78L1778.15,1152.78L1789.40,1146.29L1800.65,1152.78L1800.65,1165.78ZM1013.15,1191.78L1001.90,1185.28L1001.90,1172.29L1013.15,1165.79L1024.40,1172.29L1024.40,1185.28ZM1035.65,1191.78L1024.40,1185.28L1024.40,1172.29L1035.65,1165.79L1046.90,1172.29L1046.90,1185.28ZM1058.15,1191.78L1046.90,1185.28L1046.90,1172.29L1058.15,1165.79L1069.40,1172.29L1069.40,1185.28ZM1080.65,1191.78L1069.40,1185.28L1069.40,1172.29L1080.65,1165.79L1091.90,1172.29L1091.90,1185.28ZM1103.15,1191.78L1091.90,1185.28L1091.90,1172.29L1103.15,1165.79L1114.40,1172.29L1114.40,1185.28ZM1125.65,1191.78L1114.40,1185.28L1114.40,1172.29L1125.65,1165.79L1136.90,1172.29L1136.90,1185.28ZM1148.15,1191.78L1136.90,1185.28L1136.90,1172.29L1148.15,1165.79L1159.40,1172.29L1159.40,1185.28ZM1170.65,1191.78L1159.40,1185.28L1159.40,1172.29L1170.65,1165.79L1181.90,1172.29L1181.90,1185.28ZM1733.15,1191.78L1721.90,1185.28L1721.90,1172.29L1733.15,1165.79L1744.40,1172.29L1744.40,1185.28ZM1755.65,1191.78L1744.40,1185.28L1744.40,1172.29L1755.65,1165.79L1766.90,1172.29L1766.90,1185.28ZM1778.15,1191.78L1766.90,1185.28L1766.90,1172.29L1778.15,1165.79L1789.40,1172.29L1789.40,1185.28ZM1800.65,1191.78L1789.40,1185.28L1789.40,1172.29L1800.65,1165.79L1811.90,1172.29L1811.90,1185.28ZM1001.90,1211.28L990.65,1204.79L990.65,1191.79L1001.90,1185.30L1013.15,1191.79L1013.15,1204.79ZM1024.40,1211.28L1013.15,1204.79L1013.15,1191.79L1024.40,1185.30L1035.65,1191.79L1035.65,1204.79ZM1046.90,1211.28L1035.65,1204.79L1035.65,1191.79L1046.90,1185.30L1058.15,1191.79L1058.15,1204.79ZM1114.40,1211.28L1103.15,1204.79L1103.15,1191.79L1114.40,1185.30L1125.65,1191.79L1125.65,1204.79ZM1136.90,1211.28L1125.65,1204.79L1125.65,1191.79L1136.90,1185.30L1148.15,1191.79L1148.15,1204.79ZM1159.40,1211.28L1148.15,1204.79L1148.15,1191.79L1159.40,1185.30L1170.65,1191.79L1170.65,1204.79ZM1226.90,1211.28L1215.65,1204.79L1215.65,1191.79L1226.90,1185.30L1238.15,1191.79L1238.15,1204.79ZM1744.40,1211.28L1733.15,1204.79L1733.15,1191.79L1744.40,1185.30L1755.65,1191.79L1755.65,1204.79ZM1789.40,1211.28L1778.15,1204.79L1778.15,1191.79L1789.40,1185.30L1800.65,1191.79L1800.65,1204.79ZM1013.15,1230.79L1001.90,1224.29L1001.90,1211.30L1013.15,1204.80L1024.40,1211.30L1024.40,1224.29ZM1035.65,1230.79L1024.40,1224.29L1024.40,1211.30L1035.65,1204.80L1046.90,1211.30L1046.90,1224.29ZM1058.15,1230.79L1046.90,1224.29L1046.90,1211.30L1058.15,1204.80L1069.40,1211.30L1069.40,1224.29ZM1080.65,1230.79L1069.40,1224.29L1069.40,1211.30L1080.65,1204.80L1091.90,1211.30L1091.90,1224.29ZM1103.15,1230.79L1091.90,1224.29L1091.90,1211.30L1103.15,1204.80L1114.40,1211.30L1114.40,1224.29ZM1170.65,1230.79L1159.40,1224.29L1159.40,1211.30L1170.65,1204.80L1181.90,1211.30L1181.90,1224.29ZM1193.15,1230.79L1181.90,1224.29L1181.90,1211.30L1193.15,1204.80L1204.40,1211.30L1204.40,1224.29ZM1215.65,1230.79L1204.40,1224.29L1204.40,1211.30L1215.65,1204.80L1226.90,1211.30L1226.90,1224.29ZM1238.15,1230.79L1226.90,1224.29L1226.90,1211.30L1238.15,1204.80L1249.40,1211.30L1249.40,1224.29ZM1001.90,1250.29L990.65,1243.80L990.65,1230.80L1001.90,1224.31L1013.15,1230.80L1013.15,1243.80ZM1024.40,1250.29L1013.15,1243.80L1013.15,1230.80L1024.40,1224.31L1035.65,1230.80L1035.65,1243.80ZM1046.90,1250.29L1035.65,1243.80L1035.65,1230.80L1046.90,1224.31L1058.15,1230.80L1058.15,1243.80ZM1136.90,1250.29L1125.65,1243.80L1125.65,1230.80L1136.90,1224.31L1148.15,1230.80L1148.15,1243.80ZM1159.40,1250.29L1148.15,1243.80L1148.15,1230.80L1159.40,1224.31L1170.65,1230.80L1170.65,1243.80ZM1181.90,1250.29L1170.65,1243.80L1170.65,1230.80L1181.90,1224.31L1193.15,1230.80L1193.15,1243.80ZM1204.40,1250.29L1193.15,1243.80L1193.15,1230.80L1204.40,1224.31L1215.65,1230.80L1215.65,1243.80ZM1226.90,1250.29L1215.65,1243.80L1215.65,1230.80L1226.90,1224.31L1238.15,1230.80L1238.15,1243.80ZM1249.40,1250.29L1238.15,1243.80L1238.15,1230.80L1249.40,1224.31L1260.65,1230.80L1260.65,1243.80ZM945.65,1269.80L934.40,1263.30L934.40,1250.31L945.65,1243.81L956.90,1250.31L956.90,1263.30ZM968.15,1269.80L956.90,1263.30L956.90,1250.31L968.15,1243.81L979.40,1250.31L979.40,1263.30ZM990.65,1269.80L979.40,1263.30L979.40,1250.31L990.65,1243.81L1001.90,1250.31L1001.90,1263.30ZM1013.15,1269.80L1001.90,1263.30L1001.90,1250.31L1013.15,1243.81L1024.40,1250.31L1024.40,1263.30ZM1148.15,1269.80L1136.90,1263.30L1136.90,1250.31L1148.15,1243.81L1159.40,1250.31L1159.40,1263.30ZM1193.15,1269.80L1181.90,1263.30L1181.90,1250.31L1193.15,1243.81L1204.40,1250.31L1204.40,1263.30ZM1215.65,1269.80L1204.40,1263.30L1204.40,1250.31L1215.65,1243.81L1226.90,1250.31L1226.90,1263.30ZM1238.15,1269.80L1226.90,1263.30L1226.90,1250.31L1238.15,1243.81L1249.40,1250.31L1249.40,1263.30ZM956.90,1289.30L945.65,1282.81L945.65,1269.81L956.90,1263.32L968.15,1269.81L968.15,1282.81ZM1001.90,1289.30L990.65,1282.81L990.65,1269.81L1001.90,1263.32L1013.15,1269.81L1013.15,1282.81ZM1024.40,1289.30L1013.15,1282.81L1013.15,1269.81L1024.40,1263.32L1035.65,1269.81L1035.65,1282.81ZM1046.90,1289.30L1035.65,1282.81L1035.65,1269.81L1046.90,1263.32L1058.15,1269.81L1058.15,1282.81ZM1069.40,1289.30L1058.15,1282.81L1058.15,1269.81L1069.40,1263.32L1080.65,1269.81L1080.65,1282.81ZM1091.90,1289.30L1080.65,1282.81L1080.65,1269.81L1091.90,1263.32L1103.15,1269.81L1103.15,1282.81ZM1136.90,1289.30L1125.65,1282.81L1125.65,1269.81L1136.90,1263.32L1148.15,1269.81L1148.15,1282.81ZM1159.40,1289.30L1148.15,1282.81L1148.15,1269.81L1159.40,1263.32L1170.65,1269.81L1170.65,1282.81ZM1181.90,1289.30L1170.65,1282.81L1170.65,1269.81L1181.90,1263.32L1193.15,1269.81L1193.15,1282.81ZM1204.40,1289.30L1193.15,1282.81L1193.15,1269.81L1204.40,1263.32L1215.65,1269.81L1215.65,1282.81ZM1226.90,1289.30L1215.65,1282.81L1215.65,1269.81L1226.90,1263.32L1238.15,1269.81L1238.15,1282.81ZM1249.40,1289.30L1238.15,1282.81L1238.15,1269.81L1249.40,1263.32L1260.65,1269.81L1260.65,1282.81ZM968.15,1308.81L956.90,1302.31L956.90,1289.32L968.15,1282.82L979.40,1289.32L979.40,1302.31ZM990.65,1308.81L979.40,1302.31L979.40,1289.32L990.65,1282.82L1001.90,1289.32L1001.90,1302.31ZM1013.15,1308.81L1001.90,1302.31L1001.90,1289.32L1013.15,1282.82L1024.40,1289.32L1024.40,1302.31ZM1035.65,1308.81L1024.40,1302.31L1024.40,1289.32L1035.65,1282.82L1046.90,1289.32L1046.90,1302.31ZM1080.65,1308.81L1069.40,1302.31L1069.40,1289.32L1080.65,1282.82L1091.90,1289.32L1091.90,1302.31ZM1125.65,1308.81L1114.40,1302.31L1114.40,1289.32L1125.65,1282.82L1136.90,1289.32L1136.90,1302.31ZM1148.15,1308.81L1136.90,1302.31L1136.90,1289.32L1148.15,1282.82L1159.40,1289.32L1159.40,1302.31ZM1170.65,1308.81L1159.40,1302.31L1159.40,1289.32L1170.65,1282.82L1181.90,1289.32L1181.90,1302.31ZM1193.15,1308.81L1181.90,1302.31L1181.90,1289.32L1193.15,1282.82L1204.40,1289.32L1204.40,1302.31ZM1238.15,1308.81L1226.90,1302.31L1226.90,1289.32L1238.15,1282.82L1249.40,1289.32L1249.40,1302.31ZM979.40,1328.31L968.15,1321.82L968.15,1308.82L979.40,1302.33L990.65,1308.82L990.65,1321.82ZM1024.40,1328.31L1013.15,1321.82L1013.15,1308.82L1024.40,1302.33L1035.65,1308.82L1035.65,1321.82ZM1069.40,1328.31L1058.15,1321.82L1058.15,1308.82L1069.40,1302.33L1080.65,1308.82L1080.65,1321.82ZM1091.90,1328.31L1080.65,1321.82L1080.65,1308.82L1091.90,1302.33L1103.15,1308.82L1103.15,1321.82ZM1114.40,1328.31L1103.15,1321.82L1103.15,1308.82L1114.40,1302.33L1125.65,1308.82L1125.65,1321.82ZM1159.40,1328.31L1148.15,1321.82L1148.15,1308.82L1159.40,1302.33L1170.65,1308.82L1170.65,1321.82ZM1181.90,1328.31L1170.65,1321.82L1170.65,1308.82L1181.90,1302.33L1193.15,1308.82L1193.15,1321.82ZM1249.40,1328.31L1238.15,1321.82L1238.15,1308.82L1249.40,1302.33L1260.65,1308.82L1260.65,1321.82ZM1013.15,1347.82L1001.90,1341.32L1001.90,1328.33L1013.15,1321.83L1024.40,1328.33L1024.40,1341.32ZM1035.65,1347.82L1024.40,1341.32L1024.40,1328.33L1035.65,1321.83L1046.90,1328.33L1046.90,1341.32ZM1058.15,1347.82L1046.90,1341.32L1046.90,1328.33L1058.15,1321.83L1069.40,1328.33L1069.40,1341.32ZM1080.65,1347.82L1069.40,1341.32L1069.40,1328.33L1080.65,1321.83L1091.90,1328.33L1091.90,1341.32ZM1001.90,1367.32L990.65,1360.83L990.65,1347.83L1001.90,1341.34L1013.15,1347.83L1013.15,1360.83ZM1046.90,1367.32L1035.65,1360.83L1035.65,1347.83L1046.90,1341.34L1058.15,1347.83L1058.15,1360.83ZM1069.40,1367.32L1058.15,1360.83L1058.15,1347.83L1069.40,1341.34L1080.65,1347.83L1080.65,1360.83ZM990.65,1386.83L979.40,1380.33L979.40,1367.34L990.65,1360.84L1001.90,1367.34L1001.90,1380.33ZM1013.15,1386.83L1001.90,1380.33L1001.90,1367.34L1013.15,1360.84L1024.40,1367.34L1024.40,1380.33Z" fill="rgba(38,170,140,0.45)" stroke="#707070" stroke-width="1.9" stroke-linejoin="round"/>
<path d="M1508.15,450.59L1496.90,444.09L1496.90,431.10L1508.15,424.60L1519.40,431.10L1519.40,444.09ZM1384.40,587.12L1373.15,580.63L1373.15,567.63L1384.40,561.14L1395.65,567.63L1395.65,580.63ZM1339.40,665.14L1328.15,658.65L1328.15,645.65L1339.40,639.16L1350.65,645.65L1350.65,658.65ZM1249.40,704.15L1238.15,697.66L1238.15,684.66L1249.40,678.17L1260.65,684.66L1260.65,697.66ZM1294.40,704.15L1283.15,697.66L1283.15,684.66L1294.40,678.17L1305.65,684.66L1305.65,697.66ZM1283.15,723.66L1271.90,717.16L1271.90,704.17L1283.15,697.67L1294.40,704.17L1294.40,717.16ZM1271.90,743.16L1260.65,736.67L1260.65,723.67L1271.90,717.18L1283.15,723.67L1283.15,736.67ZM1294.40,743.16L1283.15,736.67L1283.15,723.67L1294.40,717.18L1305.65,723.67L1305.65,736.67ZM1316.90,743.16L1305.65,736.67L1305.65,723.67L1316.90,717.18L1328.15,723.67L1328.15,736.67ZM1238.15,801.68L1226.90,795.18L1226.90,782.19L1238.15,775.69L1249.40,782.19L1249.40,795.18ZM1924.40,821.18L1913.15,814.69L1913.15,801.69L1924.40,795.20L1935.65,801.69L1935.65,814.69ZM1980.65,840.69L1969.40,834.19L1969.40,821.20L1980.65,814.70L1991.90,821.20L1991.90,834.19ZM1755.65,918.71L1744.40,912.21L1744.40,899.22L1755.65,892.72L1766.90,899.22L1766.90,912.21ZM1823.15,918.71L1811.90,912.21L1811.90,899.22L1823.15,892.72L1834.40,899.22L1834.40,912.21ZM1868.15,918.71L1856.90,912.21L1856.90,899.22L1868.15,892.72L1879.40,899.22L1879.40,912.21ZM1789.40,938.21L1778.15,931.72L1778.15,918.72L1789.40,912.23L1800.65,918.72L1800.65,931.72ZM1811.90,938.21L1800.65,931.72L1800.65,918.72L1811.90,912.23L1823.15,918.72L1823.15,931.72ZM1834.40,938.21L1823.15,931.72L1823.15,918.72L1834.40,912.23L1845.65,918.72L1845.65,931.72ZM1688.15,957.72L1676.90,951.22L1676.90,938.23L1688.15,931.73L1699.40,938.23L1699.40,951.22ZM1789.40,977.22L1778.15,970.73L1778.15,957.73L1789.40,951.24L1800.65,957.73L1800.65,970.73ZM1373.15,996.73L1361.90,990.23L1361.90,977.24L1373.15,970.74L1384.40,977.24L1384.40,990.23ZM1136.90,1016.23L1125.65,1009.74L1125.65,996.74L1136.90,990.25L1148.15,996.74L1148.15,1009.74ZM1159.40,1016.23L1148.15,1009.74L1148.15,996.74L1159.40,990.25L1170.65,996.74L1170.65,1009.74ZM1620.65,1035.74L1609.40,1029.24L1609.40,1016.25L1620.65,1009.75L1631.90,1016.25L1631.90,1029.24ZM1069.40,1055.24L1058.15,1048.75L1058.15,1035.75L1069.40,1029.26L1080.65,1035.75L1080.65,1048.75ZM1091.90,1055.24L1080.65,1048.75L1080.65,1035.75L1091.90,1029.26L1103.15,1035.75L1103.15,1048.75ZM1654.40,1055.24L1643.15,1048.75L1643.15,1035.75L1654.40,1029.26L1665.65,1035.75L1665.65,1048.75ZM1125.65,1074.75L1114.40,1068.25L1114.40,1055.26L1125.65,1048.76L1136.90,1055.26L1136.90,1068.25ZM1305.65,1074.75L1294.40,1068.25L1294.40,1055.26L1305.65,1048.76L1316.90,1055.26L1316.90,1068.25ZM1181.90,1094.25L1170.65,1087.76L1170.65,1074.76L1181.90,1068.27L1193.15,1074.76L1193.15,1087.76ZM1193.15,1113.76L1181.90,1107.26L1181.90,1094.27L1193.15,1087.77L1204.40,1094.27L1204.40,1107.26ZM1091.90,1133.26L1080.65,1126.77L1080.65,1113.77L1091.90,1107.28L1103.15,1113.77L1103.15,1126.77ZM1159.40,1133.26L1148.15,1126.77L1148.15,1113.77L1159.40,1107.28L1170.65,1113.77L1170.65,1126.77ZM1080.65,1152.77L1069.40,1146.27L1069.40,1133.28L1080.65,1126.78L1091.90,1133.28L1091.90,1146.27ZM1136.90,1172.27L1125.65,1165.78L1125.65,1152.78L1136.90,1146.29L1148.15,1152.78L1148.15,1165.78ZM1181.90,1172.27L1170.65,1165.78L1170.65,1152.78L1181.90,1146.29L1193.15,1152.78L1193.15,1165.78ZM1238.15,1191.78L1226.90,1185.28L1226.90,1172.29L1238.15,1165.79L1249.40,1172.29L1249.40,1185.28ZM1181.90,1211.28L1170.65,1204.79L1170.65,1191.79L1181.90,1185.30L1193.15,1191.79L1193.15,1204.79ZM1766.90,1211.28L1755.65,1204.79L1755.65,1191.79L1766.90,1185.30L1778.15,1191.79L1778.15,1204.79ZM1035.65,1269.80L1024.40,1263.30L1024.40,1250.31L1035.65,1243.81L1046.90,1250.31L1046.90,1263.30ZM1046.90,1328.31L1035.65,1321.82L1035.65,1308.82L1046.90,1302.33L1058.15,1308.82L1058.15,1321.82ZM1204.40,1328.31L1193.15,1321.82L1193.15,1308.82L1204.40,1302.33L1215.65,1308.82L1215.65,1321.82ZM990.65,1347.82L979.40,1341.32L979.40,1328.33L990.65,1321.83L1001.90,1328.33L1001.90,1341.32Z" fill="rgba(235,60,80,0.45)" stroke="#707070" stroke-width="1.9" stroke-linejoin="round"/>
<path d="M1260.65,723.66L1249.40,717.16L1249.40,704.17L1260.65,697.67L1271.90,704.17L1271.90,717.16ZM1283.15,762.67L1271.90,756.17L1271.90,743.18L1283.15,736.68L1294.40,743.18L1294.40,756.17ZM1980.65,762.67L1969.40,756.17L1969.40,743.18L1980.65,736.68L1991.90,743.18L1991.90,756.17ZM2003.15,762.67L1991.90,756.17L1991.90,743.18L2003.15,736.68L2014.40,743.18L2014.40,756.17ZM1238.15,840.69L1226.90,834.19L1226.90,821.20L1238.15,814.70L1249.40,821.20L1249.40,834.19ZM2003.15,840.69L1991.90,834.19L1991.90,821.20L2003.15,814.70L2014.40,821.20L2014.40,834.19ZM1845.65,918.71L1834.40,912.21L1834.40,899.22L1845.65,892.72L1856.90,899.22L1856.90,912.21ZM1103.15,957.72L1091.90,951.22L1091.90,938.23L1103.15,931.73L1114.40,938.23L1114.40,951.22ZM1125.65,957.72L1114.40,951.22L1114.40,938.23L1125.65,931.73L1136.90,938.23L1136.90,951.22ZM1159.40,977.22L1148.15,970.73L1148.15,957.73L1159.40,951.24L1170.65,957.73L1170.65,970.73ZM1361.90,977.22L1350.65,970.73L1350.65,957.73L1361.90,951.24L1373.15,957.73L1373.15,970.73ZM1384.40,977.22L1373.15,970.73L1373.15,957.73L1384.40,951.24L1395.65,957.73L1395.65,970.73ZM1406.90,977.22L1395.65,970.73L1395.65,957.73L1406.90,951.24L1418.15,957.73L1418.15,970.73ZM1114.40,1016.23L1103.15,1009.74L1103.15,996.74L1114.40,990.25L1125.65,996.74L1125.65,1009.74ZM1744.40,1016.23L1733.15,1009.74L1733.15,996.74L1744.40,990.25L1755.65,996.74L1755.65,1009.74ZM1901.90,1016.23L1890.65,1009.74L1890.65,996.74L1901.90,990.25L1913.15,996.74L1913.15,1009.74ZM1080.65,1035.74L1069.40,1029.24L1069.40,1016.25L1080.65,1009.75L1091.90,1016.25L1091.90,1029.24ZM1305.65,1035.74L1294.40,1029.24L1294.40,1016.25L1305.65,1009.75L1316.90,1016.25L1316.90,1029.24ZM1058.15,1074.75L1046.90,1068.25L1046.90,1055.26L1058.15,1048.76L1069.40,1055.26L1069.40,1068.25ZM1170.65,1113.76L1159.40,1107.26L1159.40,1094.27L1170.65,1087.77L1181.90,1094.27L1181.90,1107.26ZM1271.90,1133.26L1260.65,1126.77L1260.65,1113.77L1271.90,1107.28L1283.15,1113.77L1283.15,1126.77ZM1193.15,1191.78L1181.90,1185.28L1181.90,1172.29L1193.15,1165.79L1204.40,1172.29L1204.40,1185.28ZM1215.65,1191.78L1204.40,1185.28L1204.40,1172.29L1215.65,1165.79L1226.90,1172.29L1226.90,1185.28ZM1091.90,1211.28L1080.65,1204.79L1080.65,1191.79L1091.90,1185.30L1103.15,1191.79L1103.15,1204.79ZM1249.40,1211.28L1238.15,1204.79L1238.15,1191.79L1249.40,1185.30L1260.65,1191.79L1260.65,1204.79ZM1125.65,1230.79L1114.40,1224.29L1114.40,1211.30L1125.65,1204.80L1136.90,1211.30L1136.90,1224.29ZM1215.65,1308.81L1204.40,1302.31L1204.40,1289.32L1215.65,1282.82L1226.90,1289.32L1226.90,1302.31ZM1001.90,1328.31L990.65,1321.82L990.65,1308.82L1001.90,1302.33L1013.15,1308.82L1013.15,1321.82ZM1136.90,1328.31L1125.65,1321.82L1125.65,1308.82L1136.90,1302.33L1148.15,1308.82L1148.15,1321.82ZM1226.90,1328.31L1215.65,1321.82L1215.65,1308.82L1226.90,1302.33L1238.15,1308.82L1238.15,1321.82ZM1035.65,1386.83L1024.40,1380.33L1024.40,1367.34L1035.65,1360.84L1046.90,1367.34L1046.90,1380.33Z" fill="rgba(230,135,40,0.5)" stroke="#707070" stroke-width="1.9" stroke-linejoin="round"/>
<path d="M1485.65,450.59L1474.40,444.09L1474.40,431.10L1485.65,424.60L1496.90,431.10L1496.90,444.09ZM2025.65,762.67L2014.40,756.17L2014.40,743.18L2025.65,736.68L2036.90,743.18L2036.90,756.17ZM1890.65,879.70L1879.40,873.20L1879.40,860.21L1890.65,853.71L1901.90,860.21L1901.90,873.20ZM1811.90,899.20L1800.65,892.71L1800.65,879.71L1811.90,873.22L1823.15,879.71L1823.15,892.71ZM1170.65,918.71L1159.40,912.21L1159.40,899.22L1170.65,892.72L1181.90,899.22L1181.90,912.21ZM1800.65,918.71L1789.40,912.21L1789.40,899.22L1800.65,892.72L1811.90,899.22L1811.90,912.21ZM1136.90,938.21L1125.65,931.72L1125.65,918.72L1136.90,912.23L1148.15,918.72L1148.15,931.72ZM1800.65,957.72L1789.40,951.22L1789.40,938.23L1800.65,931.73L1811.90,938.23L1811.90,951.22ZM1125.65,996.73L1114.40,990.23L1114.40,977.24L1125.65,970.74L1136.90,977.24L1136.90,990.23ZM1631.90,1016.23L1620.65,1009.74L1620.65,996.74L1631.90,990.25L1643.15,996.74L1643.15,1009.74ZM1890.65,1035.74L1879.40,1029.24L1879.40,1016.25L1890.65,1009.75L1901.90,1016.25L1901.90,1029.24ZM1103.15,1074.75L1091.90,1068.25L1091.90,1055.26L1103.15,1048.76L1114.40,1055.26L1114.40,1068.25ZM1069.40,1211.28L1058.15,1204.79L1058.15,1191.79L1069.40,1185.30L1080.65,1191.79L1080.65,1204.79ZM1204.40,1211.28L1193.15,1204.79L1193.15,1191.79L1204.40,1185.30L1215.65,1191.79L1215.65,1204.79ZM1170.65,1269.80L1159.40,1263.30L1159.40,1250.31L1170.65,1243.81L1181.90,1250.31L1181.90,1263.30ZM934.40,1289.30L923.15,1282.81L923.15,1269.81L934.40,1263.32L945.65,1269.81L945.65,1282.81ZM979.40,1289.30L968.15,1282.81L968.15,1269.81L979.40,1263.32L990.65,1269.81L990.65,1282.81ZM1058.15,1308.81L1046.90,1302.31L1046.90,1289.32L1058.15,1282.82L1069.40,1289.32L1069.40,1302.31ZM1103.15,1308.81L1091.90,1302.31L1091.90,1289.32L1103.15,1282.82L1114.40,1289.32L1114.40,1302.31ZM1024.40,1367.32L1013.15,1360.83L1013.15,1347.83L1024.40,1341.34L1035.65,1347.83L1035.65,1360.83Z" fill="rgba(120,120,120,0.5)" stroke="#707070" stroke-width="1.9" stroke-linejoin="round"/>
</svg></div>
<div style="position:absolute;left:0;top:0;width:108px;height:1584px;background:#277ba1"></div>
<div style="position:absolute;left:108px;top:185px;width:2052px;height:1px;background:#e6e6e6"></div>
<div style="position:absolute;left:-216px;top:-36px;width:2592px;height:1656px">
<div style="position:absolute;left:2034px;top:1599px;width:400px;height:21px;background:rgba(255,255,255,0.9)"></div>
<div class="t" style="left:2041.00px;top:1602.54px;font-size:14.24px;line-height:14.24px;color:#333;font-weight:normal;transform:scaleX(1.1939);">©</div>
<div class="t" style="left:2058.50px;top:1602.54px;font-size:14.24px;line-height:14.24px;color:#2a7ba3;font-weight:normal;transform:scaleX(1.0550);-webkit-text-stroke:0.2px #2a7ba3">Mapbox</div>
<div class="t" style="left:2117.50px;top:1602.54px;font-size:14.24px;line-height:14.24px;color:#333;font-weight:normal;transform:scaleX(1.1939);">©</div>
<div class="t" style="left:2135.00px;top:1602.54px;font-size:14.24px;line-height:14.24px;color:#2a7ba3;font-weight:normal;transform:scaleX(1.0541);-webkit-text-stroke:0.2px #2a7ba3">OpenStreetMap</div>
<div class="t" style="left:2245.50px;top:1602.54px;font-size:14.24px;line-height:14.24px;color:#2a7ba3;font-weight:bold;transform:scaleX(1.0726);">Improve this map</div>
</div>
</div>
<svg width="2592" height="1656" style="position:absolute;left:0;top:0"><path d="M252,101 A17,17 0 0 1 269,84 A17,17 0 0 1 252,101 Z" fill="#cde8f6"/><path d="M288,84 L271,84 A17,17 0 0 0 288,101 Z" fill="#ffffff"/><path d="M252,120 L252,103 A17,17 0 0 1 269,120 Z" fill="#cde8f6"/><path d="M288,103 A17,17 0 0 1 271,120 A17,17 0 0 1 288,103 Z" fill="#cde8f6"/><rect x="256.5" y="184.2" width="27" height="27" rx="4.5" fill="none" stroke="#fff" stroke-width="2.2" stroke-linecap="round" stroke-linejoin="round"/><path d="M264,196.3V205.2M270,190.4V205.2M276,199.4V205.2" fill="none" stroke="#fff" stroke-width="2.2" stroke-linecap="round" stroke-linejoin="round"/><rect x="256.4" y="266.9" width="27.2" height="27.4" rx="5" fill="none" stroke="#fff" stroke-width="2.2" stroke-linecap="round" stroke-linejoin="round"/><rect x="261.5" y="273.2" width="17" height="9.2" rx="3" fill="none" stroke="#fff" stroke-width="2.2" stroke-linecap="round" stroke-linejoin="round"/><circle cx="262.6" cy="288" r="1.3" fill="#fff"/><circle cx="277.6" cy="288" r="1.3" fill="#fff"/><path d="M262.6,295V298M277.6,295V298" fill="none" stroke="#fff" stroke-width="2.2" stroke-linecap="round" stroke-linejoin="round"/><circle cx="256.6" cy="356.8" r="1.3" fill="#fff"/><circle cx="256.6" cy="365.9" r="1.3" fill="#fff"/><circle cx="256.6" cy="375" r="1.3" fill="#fff"/><path d="M263,356.8H284M263,365.9H284M263,375H284" stroke="#fff" stroke-width="2.2" stroke-linecap="butt"/><rect x="255.3" y="435.2" width="12.8" height="12.8" rx="3" fill="#fff"/><circle cx="278.4" cy="441.4" r="5.6" fill="none" stroke="#fff" stroke-width="2.2" stroke-linecap="round" stroke-linejoin="round"/><path d="M262,451.8 L268.2,458 L262,464.2 L255.8,458 Z" fill="none" stroke="#fff" stroke-width="2.2" stroke-linecap="round" stroke-linejoin="round"/><rect x="272.6" y="452" width="11.6" height="11.6" rx="2.6" fill="none" stroke="#fff" stroke-width="2.2" stroke-linecap="round" stroke-linejoin="round"/><rect x="240" y="504" width="60" height="60" rx="7" fill="#02577f"/><path d="M252.6,524.2 L263.6,518.6 L276.2,524.6 L287.4,518.6 V542.7 L276.2,549.6 L263.6,542.7 L252.6,549.6 Z M263.6,518.6V542.7 M276.2,524.6V549.6" fill="none" stroke="#fff" stroke-width="2.2" stroke-linecap="round" stroke-linejoin="round"/><path d="M266.5,604.4 H260.5 Q256.2,604.4 256.2,608.7 V627.3 Q256.2,631.6 260.5,631.6 H266.5" fill="none" stroke="#fff" stroke-width="2.2" stroke-linecap="round" stroke-linejoin="round"/><path d="M264.5,618 H284 M275.6,610 L284,618 L275.6,626.2" fill="none" stroke="#fff" stroke-width="2.2" stroke-linecap="round" stroke-linejoin="round"/><rect x="240.5" y="684.5" width="59" height="59" rx="7" fill="none" stroke="#4e9dc7" stroke-width="1.2"/><rect x="255" y="699" width="30" height="30" rx="5" fill="#fff"/><path d="M270.5,704.8 A9.2,9.2 0 0 0 270.5,723.2 Z" fill="#1db393"/><path d="M271.5,714.5 V723.2 A8.2,8.2 0 0 0 279,714.5 Z" fill="#1db393"/><path d="M271.5,713 V704.6 H279 V707 A6,6 0 0 1 273,713 Z" fill="#0c5a46"/><path d="M261.3,714 H270.5" stroke="#fff" stroke-width="1"/><path d="M262.2,1500.6 V1495.5 A7.8,7.8 0 0 1 277.8,1495.5 V1500.6" fill="none" stroke="#fff" stroke-width="2.2" stroke-linecap="round" stroke-linejoin="round"/><rect x="256" y="1500.8" width="28" height="18" rx="3.5" fill="none" stroke="#fff" stroke-width="2.2" stroke-linecap="round" stroke-linejoin="round"/><path d="M580.8,80.6 L586.7,86.5 L592.6,80.6" fill="none" stroke-linecap="round" stroke-linejoin="round" stroke="#2a7ba3" stroke-width="2.2"/><path d="M745,80.6 L751,86.5 L757,80.6" fill="none" stroke-linecap="round" stroke-linejoin="round" stroke="#2a7ba3" stroke-width="2.2"/><rect x="781" y="66" width="2.2" height="34" fill="#333"/><rect x="354.6" y="132.6" width="145.6" height="64.4" rx="8.5" fill="#fff" stroke="#a9c3f1" stroke-width="1.4"/><path d="M380,157.9H391.3 M396.8,157.9H400 M380,164.9H383.2 M388.6,164.9H400 M380,172H391.3 M396.8,172H400" stroke="#2d46a2" stroke-width="2"/><circle cx="394" cy="157.9" r="2.6" fill="none" stroke="#2d46a2" stroke-width="1.9"/><circle cx="385.9" cy="164.9" r="2.6" fill="none" stroke="#2d46a2" stroke-width="1.9"/><circle cx="394" cy="172" r="2.6" fill="none" stroke="#2d46a2" stroke-width="1.9"/><rect x="522.8" y="132.6" width="130.2" height="64.4" rx="8.5" fill="#fff" stroke="#c9c9c9" stroke-width="1.4"/><rect x="586.6" y="133" width="1.3" height="64" fill="#c9c9c9"/><path d="M561.2,155.6 L549.4,165 L561.2,174.4" fill="none" stroke-linecap="round" stroke-linejoin="round" stroke="#1f1f1f" stroke-width="2.2"/><path d="M615,155.6 L626.8,165 L615,174.4" fill="none" stroke-linecap="round" stroke-linejoin="round" stroke="#1f1f1f" stroke-width="2.2"/><rect x="843.6" y="132.6" width="413.6" height="64.8" rx="8.5" fill="#fff" stroke="#c9c9c9" stroke-width="1.4"/><rect x="993" y="153" width="43" height="24" rx="12" fill="#cbe9f8"/><rect x="1191" y="153" width="43" height="24" rx="12" fill="#cbe9f8"/><rect x="1060" y="153.8" width="2" height="22.6" fill="#333"/><circle cx="2169" cy="84" r="15" fill="none" stroke="#3a52a6" stroke-width="2.4"/><path d="M2164.6,80.2 A4.6,4.6 0 1 1 2170.5,84.6 Q2169,85.4 2169,87.6 V88.4" fill="none" stroke-linecap="round" stroke-linejoin="round" stroke="#3a52a6" stroke-width="2.3"/><circle cx="2169" cy="92.6" r="1.35" fill="#3a52a6"/><rect x="2220" y="58.6" width="125.8" height="50.8" rx="9" fill="#3a53a6"/><path d="M2244,84 L2256,76 M2244,84 L2256,92" stroke="#fff" stroke-width="2"/><circle cx="2256" cy="76" r="3.6" fill="#3a53a6" stroke="#fff" stroke-width="2"/><circle cx="2244" cy="84" r="3.6" fill="#3a53a6" stroke="#fff" stroke-width="2"/><circle cx="2256" cy="92" r="3.6" fill="#3a53a6" stroke="#fff" stroke-width="2"/><rect x="2229" y="148" width="2" height="34" fill="#333"/><rect x="354.5" y="253.3" width="451.5" height="63.2" rx="8.5" fill="#fff" stroke="#cfcfcf" stroke-width="1.3"/><circle cx="388.7" cy="283.6" r="7.9" fill="none" stroke="#1f1f1f" stroke-width="2.1"/><path d="M394.6,289.6 L399.6,294.6" stroke="#1f1f1f" stroke-width="2.1" stroke-linecap="round"/><rect x="820.2" y="253.3" width="64" height="63.2" rx="8.5" fill="#fff" stroke="#cfcfcf" stroke-width="1.3"/><rect x="838.4" y="270.6" width="27.6" height="28.2" rx="3.8" fill="none" stroke-linecap="round" stroke-linejoin="round" stroke="#1f1f1f" stroke-width="2.2"/><path d="M847,271V298.5" stroke="#1f1f1f" stroke-width="2.2"/><path d="M855.6,279.6 L861,284.6 L855.6,289.6" fill="none" stroke-linecap="round" stroke-linejoin="round" stroke="#1f1f1f" stroke-width="2.2"/><rect x="945.8000000000001" y="260.2" width="164.70000000000002" height="49.4" rx="24.7" fill="#eaf6fc" stroke="#2b79a1" stroke-width="1.5"/><circle cx="972.1" cy="285" r="6.2" fill="#e3111e"/><rect x="1124.5" y="260.2" width="198.6" height="49.4" rx="24.7" fill="#eaf6fc" stroke="#2b79a1" stroke-width="1.5"/><circle cx="1150.8" cy="285" r="6.2" fill="#13a087"/><rect x="1337.5" y="260.2" width="155.39999999999995" height="49.4" rx="24.7" fill="#eaf6fc" stroke="#2b79a1" stroke-width="1.5"/><circle cx="1363.8" cy="285" r="6.2" fill="#ec7000"/><rect x="1507.1000000000001" y="260.2" width="234.6999999999999" height="49.4" rx="24.7" fill="#eaf6fc" stroke="#2b79a1" stroke-width="1.5"/><circle cx="1533.4" cy="285" r="6.2" fill="#a3a3a3"/><rect x="2227" y="1519" width="70" height="70" rx="7" fill="#fff" stroke="#b0b0b0" stroke-width="2.4"/><path d="M2262,1553.2 L2281.5,1565 L2262,1576.8 L2242.5,1565 Z" fill="#a6a6a6"/><path d="M2262,1546.6 L2281.5,1558.4 L2262,1570.2 L2242.5,1558.4 Z" fill="#c4c4c4" stroke="#fff" stroke-width="1.2"/><path d="M2262,1536 L2281.5,1547.8 L2262,1559.6 L2242.5,1547.8 Z" fill="#dcdcdc" stroke="#fff" stroke-width="1.2"/><path d="M2262,1541 L2276,1549 L2262,1557 L2248,1549 Z" fill="#cfcfcf"/><rect x="2311.2" y="1493.8" width="48.6" height="95.6" rx="6.5" fill="#fff" stroke="#b0b0b0" stroke-width="2.4"/><rect x="2312.4" y="1540.2" width="46.2" height="1.4" fill="#d0d0d0"/><path d="M2335.5,1513.2V1531.4 M2326.4,1522.3H2344.6" stroke="#111" stroke-width="2.8"/><path d="M2326.4,1567H2344.6" stroke="#111" stroke-width="2.8"/><rect x="2084" y="1539" width="130" height="25" fill="#fff"/><rect x="2084" y="1565" width="104" height="25" fill="#fff"/><path d="M2084,1539 V1590 M2084,1564.3 H2214 V1539 M2187.6,1564.3 V1590" fill="none" stroke="#777" stroke-width="2.2"/><rect x="90" y="163.2" width="272" height="3.6" fill="#e99c3a"/><rect x="1752" y="287.8" width="750" height="3.4" fill="#e99c3a"/><rect x="2298" y="1552.8" width="200" height="3.4" fill="#e99c3a"/><circle cx="48" cy="165" r="48" fill="#e99c3a"/><path d="M37.6,152.4 L53.3,146.8 V181.6 H45.6 V155.2 L37.6,158.2 Z" fill="#fff"/><circle cx="2544" cy="289.5" r="48.3" fill="#e99c3a"/><circle cx="2544" cy="1554" r="48" fill="#e99c3a"/></svg>
<div class="t" style="left:354.50px;top:73.05px;font-size:24.27px;line-height:24.27px;color:#2a7ba3;font-weight:normal;transform:scaleX(1.0936);-webkit-text-stroke:0.35px #2a7ba3">Oxleyshire Transit</div>
<div class="t" style="left:617.50px;top:73.05px;font-size:24.27px;line-height:24.27px;color:#2a7ba3;font-weight:normal;transform:scaleX(1.1126);-webkit-text-stroke:0.35px #2a7ba3">Millhaven</div>
<div class="t" style="left:800.00px;top:72.33px;font-size:24.42px;line-height:24.42px;color:#1d1d1d;font-weight:normal;transform:scaleX(1.1194);-webkit-text-stroke:0.35px #1d1d1d">Network map</div>
<div class="t" style="left:415.80px;top:153.07px;font-size:21.66px;line-height:21.66px;color:#2d46a2;font-weight:normal;transform:scaleX(1.0152);-webkit-text-stroke:0.35px #2d46a2">Filters</div>
<div class="t" style="left:675.80px;top:140.85px;font-size:14.83px;line-height:14.83px;color:#2a2a2a;font-weight:normal;letter-spacing:0.461px;-webkit-text-stroke:0.25px #2a2a2a">CALENDAR MONTH</div>
<div class="t" style="left:675.50px;top:165.98px;font-size:22.24px;line-height:22.24px;color:#1d1d1d;font-weight:normal;transform:scaleX(1.0202);-webkit-text-stroke:0.55px #1d1d1d">Sep 2025</div>
<div class="t" style="left:867.50px;top:154.53px;font-size:22.53px;line-height:22.53px;color:#1f1f1f;font-weight:normal;transform:scaleX(1.0568);">Operators:</div>
<div class="t" style="left:1085.00px;top:154.53px;font-size:22.53px;line-height:22.53px;color:#1f1f1f;font-weight:normal;transform:scaleX(1.0044);">Services:</div>
<div class="t" style="left:1004.00px;top:157.68px;font-size:15.26px;line-height:15.26px;color:#1d6f96;font-weight:normal;transform:scaleX(1.2396);-webkit-text-stroke:0.3px #1d6f96">All</div>
<div class="t" style="left:1202.00px;top:157.68px;font-size:15.26px;line-height:15.26px;color:#1d6f96;font-weight:normal;transform:scaleX(1.2396);-webkit-text-stroke:0.3px #1d6f96">All</div>
<div class="t" style="left:2108.00px;top:156.24px;font-size:19.33px;line-height:19.33px;color:#2d46a2;font-weight:normal;transform:scaleX(1.0150);-webkit-text-stroke:0.3px #2d46a2">Reset filters</div>
<div class="t" style="left:2246.80px;top:156.24px;font-size:19.33px;line-height:19.33px;color:#2d46a2;font-weight:normal;transform:scaleX(1.0220);-webkit-text-stroke:0.3px #2d46a2">Save filters</div>
<div class="t" style="left:2275.00px;top:74.56px;font-size:19.19px;line-height:19.19px;color:#fff;font-weight:normal;transform:scaleX(1.0151);-webkit-text-stroke:0.35px #fff">Share</div>
<div class="t" style="left:414.90px;top:274.17px;font-size:23.55px;line-height:23.55px;color:#757575;font-weight:normal;transform:scaleX(1.0018);">Search for Stop or Service</div>
<div class="t" style="left:987.70px;top:275.61px;font-size:18.90px;line-height:18.90px;color:#1d1d1d;font-weight:normal;transform:scaleX(0.9254);">Early - 12.3%</div>
<div class="t" style="left:1165.40px;top:275.61px;font-size:18.90px;line-height:18.90px;color:#1d1d1d;font-weight:normal;transform:scaleX(1.0226);">On time - 74.3%</div>
<div class="t" style="left:1378.00px;top:275.61px;font-size:18.90px;line-height:18.90px;color:#1d1d1d;font-weight:normal;transform:scaleX(0.9995);">Late - 8.2%</div>
<div class="t" style="left:1548.00px;top:275.61px;font-size:18.90px;line-height:18.90px;color:#1d1d1d;font-weight:normal;transform:scaleX(1.0531);">Not detected - 5.2%</div>
<div class="t" style="left:2093.00px;top:1543.74px;font-size:18.02px;line-height:18.02px;color:#777;font-weight:normal;transform:scaleX(0.9773);">10 km</div>
<div class="t" style="left:2093.00px;top:1569.14px;font-size:18.02px;line-height:18.02px;color:#777;font-weight:normal;transform:scaleX(1.0862);">5 mi</div>
<div class="t" style="left:2531.60px;top:264.04px;font-size:50.87px;line-height:50.87px;color:#fff;font-weight:bold;transform:scaleX(0.8536);">3</div>
<div class="t" style="left:2532.00px;top:1529.11px;font-size:50.44px;line-height:50.44px;color:#fff;font-weight:bold;transform:scaleX(0.8574);">2</div>
</body></html>
